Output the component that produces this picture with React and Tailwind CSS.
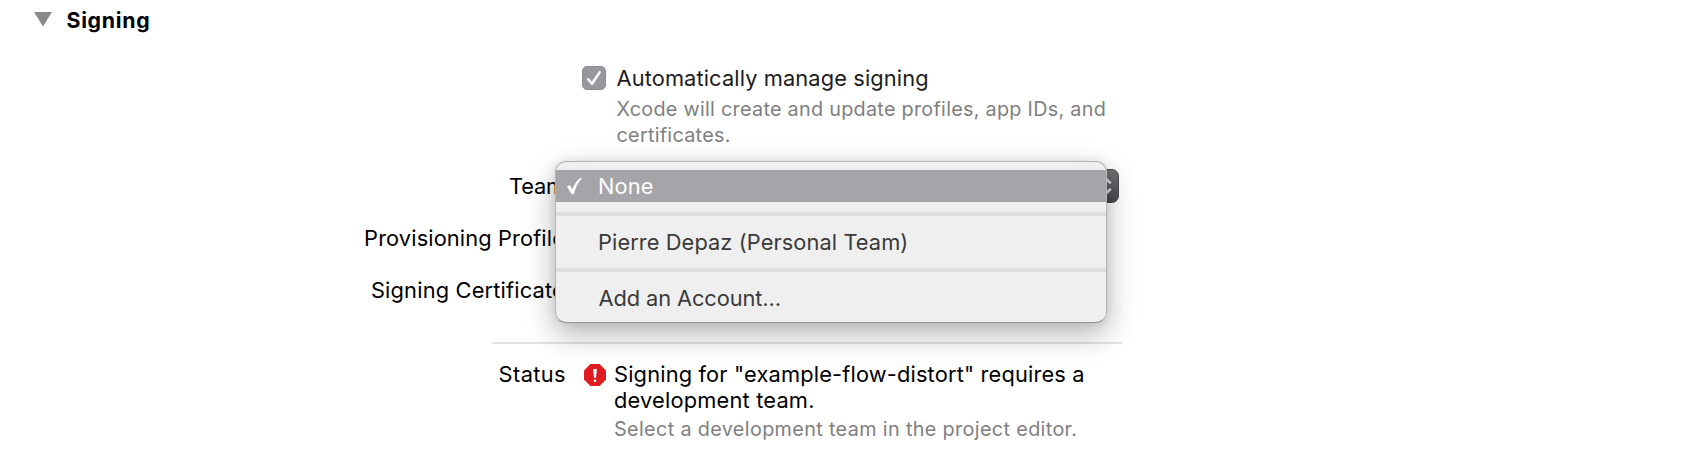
import React from "react";

function Chevrons() {
  return (
    <svg className="size-full" viewBox="0 0 32 32" fill="none" stroke="#dcdcde" strokeWidth="2.6" strokeLinecap="butt" strokeLinejoin="miter">
      <path d="M10.4 13.4L17.6 6.4L24.8 13.4M10.4 18.8L17.6 25.8L24.8 18.8" />
    </svg>
  );
}

function TeamMenu() {
  return (
    <div className="absolute left-[555px] top-[161px] flex h-[162px] w-[552px] flex-col overflow-hidden rounded-[11px] border border-[#b4b4b4] border-b-[#949494] bg-[#efefef] pt-[8px] text-[#3a3a3a]">
      <div className="flex h-[32px] shrink-0 items-center bg-[#a5a4a9] text-white">
        <svg className="ml-[10px] h-[18px] w-[16px] shrink-0" viewBox="0 0 16 18">
          <path d="M1 9.8L3.7 8.1L6.4 12.2C8 7.8 10.6 3.7 14.4 0.7L15.8 1.5C11.9 5.8 9.4 10.8 7.9 17H5.4Z" fill="white" />
        </svg>
        <span className="ml-[16px] leading-[26px] tracking-[0.12px]">None</span>
      </div>
      <div className="mt-[10px] h-[4px] shrink-0 bg-[#dedede]" />
      <div className="mt-[13px] h-[26px] shrink-0 pl-[42px] tracking-[0.09px]">Pierre Depaz (Personal Team)</div>
      <div className="mt-[13px] h-[4px] shrink-0 bg-[#dedede]" />
      <div className="mt-[13px] h-[26px] shrink-0 pl-[42.5px] tracking-[-0.09px]">Add an Account…</div>
    </div>
  );
}

export default function App() {
  return (
    <div className="relative h-[460px] w-[1700px] overflow-hidden bg-white font-['Inter',sans-serif] text-[21.8px] leading-[26px] font-normal whitespace-nowrap text-black">
      <div className="flex h-[65px] pt-[7px] pl-[34px]">
        <svg className="mt-[5px] h-[15px] w-[18px]" viewBox="0 0 18 15">
          <path d="M0 0H18L9 14.6Z" fill="#8a8a8a" />
        </svg>
        <h2 className="ml-[14.5px] text-[21.3px] font-bold tracking-[0.7px]">Signing</h2>
      </div>

      <div className="flex h-[108px] pl-[582px]">
        <div className="mt-px size-[24px] shrink-0 rounded-[5px] border border-[#8c8b90] bg-[#98979c]">
          <svg className="size-[22px]" viewBox="0 0 22 22" fill="none" stroke="white" strokeWidth="2.5" strokeLinecap="round" strokeLinejoin="round">
            <path d="M5.2 12.2L9 16.8L16.6 5.4" />
          </svg>
        </div>
        <div className="ml-[10.5px]">
          <div className="tracking-[0.12px] text-[#1c1c1c]">Automatically manage signing</div>
          <div className="mt-[5px] text-[19.8px] tracking-[0.28px] text-[#808080]">
            Xcode will create and update profiles, app IDs, and
            <br />
            certificates.
          </div>
        </div>
      </div>

      <div className="flex h-[169px]">
        <div className="flex w-[565px] flex-col gap-[26px] text-right">
          <div className="tracking-[-0.15px]">Team</div>
          <div className="tracking-[0.12px]">Provisioning Profile</div>
          <div className="tracking-[0.18px]">Signing Certificate</div>
        </div>
        <div className="-mt-[4px] flex h-[34px] w-[554px] justify-end">
          <div className="h-[34px] w-[34px] rounded-r-[7px] border border-[#4c4c4f] bg-linear-to-b from-[#737276] to-[#48474b]">
            <Chevrons />
          </div>
        </div>
      </div>

      <div className="ml-[492px] h-[2px] w-[630px] bg-[#e2e2e2]" />

      <div className="flex pt-[17px]">
        <div className="w-[566px] text-right tracking-[0.4px]">Status</div>
        <svg className="ml-[18px] mt-[3px] size-[22px] shrink-0" viewBox="0 0 22 22">
          <path d="M6.4 0H15.6L22 6.4V15.6L15.6 22H6.4L0 15.6V6.4Z" fill="#e01b22" />
          <path d="M9.1 5.2Q11 4.2 12.9 5.2L12 13.8H10Z" fill="white" />
          <rect x="9.8" y="15.4" width="2.4" height="2.5" rx="0.5" fill="white" />
        </svg>
        <div className="ml-[8px]">
          <div className="tracking-[0.17px]">Signing for "example-flow-distort" requires a</div>
          <div className="tracking-[0.2px]">development team.</div>
          <div className="mt-[3px] text-[19.8px] tracking-[0.36px] text-[#808080]">Select a development team in the project editor.</div>
        </div>
      </div>

      <div className="absolute left-[555px] top-[161px] h-[162px] w-[552px] rounded-[11px] shadow-[0_11px_30px_rgba(0,0,0,0.3),0_0_8px_rgba(0,0,0,0.08)]" />
      <TeamMenu />
    </div>
  );
}
